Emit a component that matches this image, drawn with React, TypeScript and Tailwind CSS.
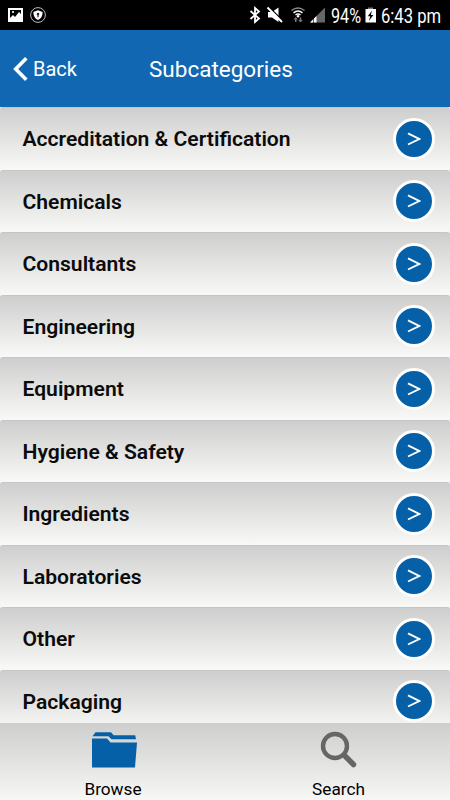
const categories = [
  "Accreditation & Certification",
  "Chemicals",
  "Consultants",
  "Engineering",
  "Equipment",
  "Hygiene & Safety",
  "Ingredients",
  "Laboratories",
  "Other",
  "Packaging",
];

function StatusBar() {
  return (
    <div className="flex h-[30px] shrink-0 items-center bg-black text-[20px] leading-[30px] whitespace-nowrap text-white">
      <svg className="shrink-0" width="331" height="30" viewBox="0 0 331 30">
        {/* gallery */}
        <path fill="#fff" fillRule="evenodd" d="M8 8h15v14H8zM10 10v8l3-3 2 2 4-5 2 2v-4z" />
        <circle cx="13" cy="12" r="1.1" fill="#fff" />
        {/* shield */}
        <circle cx="38" cy="15" r="7.4" fill="none" stroke="#bbb" strokeWidth="1" />
        <path fill="#fff" d="M38 10.3l4.6 1.6c0 4-1.4 6.3-4.6 8.1-3.2-1.8-4.6-4.1-4.6-8.1z" />
        <path fill="#222" d="M38 12.7a1.4 1.4 0 0 1 .6 2.6v2h-1.2v-2a1.4 1.4 0 0 1 .6-2.6z" />
        {/* bluetooth */}
        <path fill="none" stroke="#fff" strokeWidth="1.8" d="M250.5 11l8.5 7.5-4 3.5V8l4 3.5-8.5 7.5" />
        {/* muted speaker */}
        <path fill="#fff" d="M268 12h4l6.5-4.5v14.5l-6.5-4.5h-4z" />
        <path stroke="#000" strokeWidth="1.4" d="M269.5 7.5l14 14" />
        <path stroke="#fff" strokeWidth="2" d="M267.5 7.5l14.5 14.5" />
        {/* wifi */}
        <g fill="none" strokeWidth="1.5">
          <path stroke="#888" d="M291.5 10.5q6.5-5 13 0" />
          <path stroke="#fff" d="M293.5 12.8q4.5-3.6 9 0M295.5 15q2.5-2 5 0" />
        </g>
        <circle cx="298" cy="16.3" r="1.2" fill="#fff" />
        <path fill="#777" d="M293.5 19.5l2.2-2.5 2.2 2.5h-1.4V22H295v-2.5zM298.3 20h1.4v-2.5h1.6V20h1.4l-2.2 2.5z" />
        {/* signal */}
        <path fill="#666" d="M310 22.5l15-15v15z" />
        <path fill="#fff" d="M310 22.5l3-3v3zM314 22.5v-4l2.5-2.5v6.5z" />
      </svg>
      <span className="w-[34px] shrink-0">
        <span className="inline-block origin-left scale-x-[0.81] pt-px">94%</span>
      </span>
      {/* battery */}
      <svg className="shrink-0" width="16" height="30" viewBox="0 0 16 30">
        <path fill="#777" d="M3 7.5h5V9H3z" />
        <path fill="#fff" d="M.5 9H11v13.5H.5z" />
        <path fill="#000" d="M7 10.5l-4.2 5.8h2.5L3.8 21l4.6-6H5.8z" />
      </svg>
      <span className="w-[68px] shrink-0">
        <span className="inline-block origin-left scale-x-[0.83] pt-px">6:43 pm</span>
      </span>
    </div>
  );
}

function Header() {
  return (
    <header className="grid h-[77px] shrink-0 grid-cols-[149px_1fr] items-center bg-[#1167b1] text-white">
      <div className="flex items-center pl-[13px]">
        <svg width="15" height="24" viewBox="0 0 15 24" fill="none" stroke="#fff" strokeWidth="3.6">
          <path d="M13.3 1.3L2.7 12l10.6 10.7" />
        </svg>
        <span className="ml-[5px] pt-px text-[20px] leading-6">Back</span>
      </div>
      <h1 className="pt-px text-[22.5px] leading-6">Subcategories</h1>
    </header>
  );
}

function Row({ label }: { label: string }) {
  return (
    <li className="flex h-[62.5px] shrink-0 items-center justify-between rounded-[3px] border-t border-[#c6c6c6] bg-gradient-to-b from-[#cecece] to-[#f9f9f7] pr-[15.5px] pl-[22.5px]">
      <span className="pt-px text-[21.1px] leading-6 font-semibold text-[#0b0b0b]">{label}</span>
      <span className="flex size-[42px] items-center justify-center rounded-full border-[3px] border-white bg-[#0560a8]">
        <svg width="14" height="14" viewBox="0 0 14 14" fill="none" stroke="#fff" strokeWidth="1.9">
          <path d="M1 1.3L12.2 7 1 12.5" />
        </svg>
      </span>
    </li>
  );
}

function TabBar() {
  return (
    <nav className="grid h-[77px] shrink-0 grid-cols-2 bg-gradient-to-b from-[#cecece] to-[#f7f7f5] text-[17.2px] leading-5 text-black">
      <div className="flex flex-col items-center pt-[8px] pl-px">
        <svg className="ml-px" width="46" height="38" viewBox="0 0 46 38" fill="#0560a8">
          <path d="M1.5 5.2l3-4H20l2.7 3h21.5l.8 4H20.5l-3-3z" />
          <path d="M1 7.5h15l3.5 4H46l-2 25H1z" />
        </svg>
        <span className="mt-[10px]">Browse</span>
      </div>
      <div className="flex flex-col items-center pt-[8px] pl-[2px]">
        <svg width="38" height="38" viewBox="0 0 38 38" fill="none" stroke="#666">
          <circle cx="15" cy="15" r="12" strokeWidth="4.4" />
          <path d="M24 24l3 3" strokeWidth="4" />
          <path d="M26 26l7.5 7.5" strokeWidth="5.5" strokeLinecap="round" />
        </svg>
        <span className="mt-[10px]">Search</span>
      </div>
    </nav>
  );
}

export default function App() {
  return (
    <div className="flex h-[800px] w-[450px] flex-col overflow-hidden bg-[#f4f4f2] font-[Roboto,sans-serif]">
      <StatusBar />
      <Header />
      <ul className="flex min-h-0 flex-1 flex-col overflow-hidden">
        {categories.map((label) => (
          <Row key={label} label={label} />
        ))}
      </ul>
      <TabBar />
    </div>
  );
}
